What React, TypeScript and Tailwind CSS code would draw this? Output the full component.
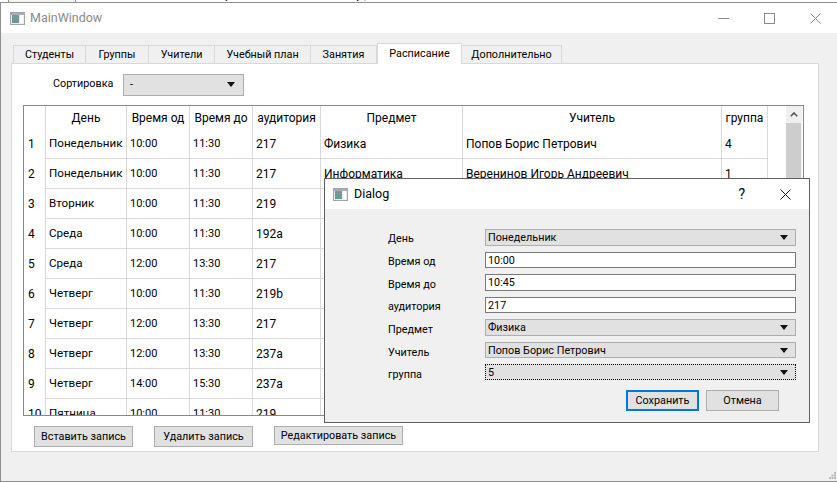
const F = "font-['Roboto',sans-serif]";

function WinIcon() {
  return (
    <svg width="15" height="13" viewBox="0 0 15 13" className="shrink-0">
      <defs>
        <linearGradient id="g" x1="0" y1="0" x2="0" y2="1">
          <stop offset="0" stopColor="#7f93a8" />
          <stop offset="1" stopColor="#5f9f86" />
        </linearGradient>
      </defs>
      <rect x="0.5" y="0.5" width="14" height="12" fill="#e8eef2" stroke="#a0a4a8" />
      <rect x="1" y="1" width="13" height="2" fill="#a8aeb4" />
      <rect x="2" y="3" width="7" height="8" fill="url(#g)" />
      <rect x="10" y="3" width="3" height="8" fill="#ffffff" />
    </svg>
  );
}

function Arrow() {
  return (
    <svg width="8" height="5" viewBox="0 0 8 5" className="shrink-0">
      <path d="M0 0H8L4 5Z" fill="#111" />
    </svg>
  );
}

function Combo({ text, cls, dotted }: { text: string; cls: string; dotted?: boolean }) {
  return (
    <div className={`flex items-center justify-between bg-[#e1e1e1] ${dotted ? "border border-dotted border-black" : "border border-[#adadad]"} ${cls}`}>
      <span className="pl-[2px] pt-[2px] leading-none whitespace-nowrap">{text}</span>
      <Arrow />
    </div>
  );
}

function Field({ text, cls }: { text: string; cls: string }) {
  return (
    <div className={`flex items-center bg-white border border-[#7a7a7a] pl-[2px] pt-[2px] ${cls}`}>{text}</div>
  );
}

function Btn({ text, cls }: { text: string; cls: string }) {
  return (
    <div className={`flex items-center justify-center whitespace-nowrap bg-[#e1e1e1] border border-[#adadad] pt-[1px] ${cls}`}>{text}</div>
  );
}

const tabs = [
  ["Студенты", "w-[73px]"],
  ["Группы", "w-[63px]"],
  ["Учители", "w-[66px]"],
  ["Учебный план", "w-[96px]"],
  ["Занятия", "w-[66px]"],
];

const rows = [
  ["1", "Понедельник", "10:00", "11:30", "217", "Физика", "Попов Борис Петрович", "4"],
  ["2", "Понедельник", "10:00", "11:30", "217", "Информатика", "Веренинов Игорь Андреевич", "1"],
  ["3", "Вторник", "10:00", "11:30", "219", "", "", ""],
  ["4", "Среда", "10:00", "11:30", "192a", "", "", ""],
  ["5", "Среда", "12:00", "13:30", "217", "", "", ""],
  ["6", "Четверг", "10:00", "11:30", "219b", "", "", ""],
  ["7", "Четверг", "12:00", "13:30", "217", "", "", ""],
  ["8", "Четверг", "12:00", "13:30", "237a", "", "", ""],
  ["9", "Четверг", "14:00", "15:30", "237a", "", "", ""],
  ["10", "Пятница", "10:00", "11:30", "219", "", "", ""],
];

const heads = ["", "День", "Время од", "Время до", "аудитория", "Предмет", "Учитель", "группа"];
const cols = "grid grid-cols-[22px_81px_63px_63px_68px_142px_259px_46px]";

function Table() {
  return (
    <div className="relative h-[311px] w-[781px] ml-[11px] border border-[#828790] bg-white overflow-hidden text-[12px]">
      <div className={`${cols} w-[744px] h-[23px]`}>
        {heads.map((h, i) => (
          <div key={i} className="flex items-center justify-center h-[23px] border-r border-[#d9d9d9] whitespace-nowrap">{h}</div>
        ))}
      </div>
      {rows.map((r) => (
        <div key={r[0]} className={`${cols} w-[744px] h-[30px]`}>
          {r.map((c, i) => (
            <div key={i} className={`flex items-center h-[30px] whitespace-nowrap overflow-hidden border-r border-[#d9d9d9] ${i === 0 ? "pl-[4px]" : "pl-[3px] border-b"} ${i === 2 || i === 3 ? "text-[11px] pt-[2px]" : i === 1 ? "text-[11.6px] pt-[1px]" : "text-[12px]"}`}>{c}</div>
          ))}
        </div>
      ))}
      <div className="absolute right-0 top-0 bottom-0 w-[16px] mr-[1px] bg-[#f0f0f0] flex flex-col">
        <div className="h-[17px] flex items-center justify-center">
          <svg width="8" height="5" viewBox="0 0 8 5"><path d="M0.8 4.2L4 1L7.2 4.2" fill="none" stroke="#555" strokeWidth="1.6" /></svg>
        </div>
        <div className="w-[15px] h-[120px] bg-[#cdcdcd]" />
      </div>
    </div>
  );
}

function Dialog() {
  const labels = ["День", "Время од", "Время до", "аудитория", "Предмет", "Учитель", "группа"];
  return (
    <div className="absolute left-[324px] top-[178px] w-[486px] h-[245px] border border-[#5f5f5f] bg-[#f0f0f0] flex flex-col">
      <div className="h-[30px] bg-white flex items-center pl-[8px] shrink-0">
        <WinIcon />
        <span className="ml-[6px] text-[12.5px]">Dialog</span>
        <span className="ml-auto mr-[35px] text-[14px]">?</span>
        <svg width="11" height="11" viewBox="0 0 11 11" className="mr-[18px]"><path d="M0.5 0.5L10.5 10.5M10.5 0.5L0.5 10.5" stroke="#111" strokeWidth="1" /></svg>
      </div>
      <div className="flex pl-[63px] flex-1">
        <div className="w-[97px] flex flex-col pt-[19px]">
          {labels.map((l) => (
            <div key={l} className="h-[22.7px] flex items-center whitespace-nowrap">{l}</div>
          ))}
        </div>
        <div className="w-[311px] flex flex-col pt-[20px]">
          <Combo text="Понедельник" cls="h-[17px] pr-[7px]" />
          <Field text="10:00" cls="h-[16px] mt-[6px]" />
          <Field text="10:45" cls="h-[17px] mt-[6px]" />
          <Field text="217" cls="h-[16px] mt-[6px]" />
          <Combo text="Физика" cls="h-[17px] mt-[6px] pr-[7px]" />
          <Combo text="Попов Борис Петрович" cls="h-[16px] mt-[6px] pr-[7px]" />
          <Combo text="5" dotted cls="h-[16px] mt-[6px] pr-[7px]" />
          <div className="flex mt-[10px] ml-[141px] gap-[7px]">
            <Btn text="Сохранить" cls="w-[73px] h-[21px] !border-2 !border-[#0078d7]" />
            <Btn text="Отмена" cls="w-[73px] h-[21px]" />
          </div>
        </div>
      </div>
    </div>
  );
}

function Grip() {
  return (
    <svg width="7" height="7" viewBox="0 0 7 7" className="absolute right-[1px] bottom-[2px]">
      <path d="M5 0h2v2H5zM2.500 2.500h2v2h-2zM5 2.500h2v2H5zM0 5h2v2H0zM2.500 5h2v2h-2zM5 5h2v2H5z" fill="#bcbcbc" />
    </svg>
  );
}

export default function App() {
  return (
    <div className={`relative w-[837px] h-[482px] overflow-hidden bg-white text-[10.8px] text-black ${F}`}>
      <div className="flex h-[2px] overflow-hidden">
        <div className="ml-[8px] w-[68px] h-[2px] shrink-0 border-x border-[#8f8f8f] bg-[#f4f4ee]" />
        <div className="pl-[21px] font-['Liberation_Mono',monospace] text-[13px] leading-[14px] mt-[-12px] whitespace-nowrap">
          setTableFontMode(<span className="text-[#2a9d3c]">"student"</span>, index);
        </div>
      </div>
      <div className="relative h-[480px] border-t border-l border-b border-[#8f8f8f] bg-[#f0f0f0] flex flex-col">
        <div className="h-[30px] bg-white flex items-center pl-[9px] shrink-0">
          <WinIcon />
          <span className="ml-[5px] text-[#8a8a8a] text-[12.5px]">MainWindow</span>
          <svg width="11" height="1" viewBox="0 0 11 1" className="ml-auto mr-[35px]"><rect width="11" height="1" fill="#8a8a8a" /></svg>
          <div className="w-[11px] h-[11px] border border-[#8a8a8a] mr-[35px]" />
          <svg width="11" height="11" viewBox="0 0 11 11" className="mr-[16px]"><path d="M0.5 0.5L10.5 10.5M10.5 0.5L0.5 10.5" stroke="#8a8a8a" strokeWidth="1" /></svg>
        </div>
        <div className="flex items-end h-[30px] pl-[12px] shrink-0">
          {tabs.map(([t, w]) => (
            <div key={t} className={`${w} h-[18px] flex items-center justify-center pt-[2px] bg-[#f0f0f0] border border-b-0 border-l-0 first:border-l border-[#d9d9d9]`}>{t}</div>
          ))}
          <div className="w-[85px] h-[21px] flex items-center justify-center bg-white border border-b-0 border-[#d9d9d9] relative z-10 -mb-px">Расписание</div>
          <div className="w-[100px] h-[18px] flex items-center justify-center pt-[2px] bg-[#f0f0f0] border border-b-0 border-l-0 border-[#d9d9d9]">Дополнительно</div>
        </div>
        <div className="ml-[10px] w-[808px] h-[389px] border border-[#d9d9d9] bg-white flex flex-col">
          <div className="flex items-center h-[41px] pl-[41px] shrink-0">
            <span className="w-[70px] -mt-[1px] whitespace-nowrap">Сортировка</span>
            <Combo text="-" cls="w-[121px] h-[22px] pr-[8px] pl-[4px]" />
          </div>
          <Table />
          <div className="flex items-start pl-[22px] pt-[10px] gap-[21px]">
            <Btn text="Вставить запись" cls="w-[99px] h-[21px]" />
            <Btn text="Удалить запись" cls="w-[99px] h-[21px]" />
            <Btn text="Редактировать запись" cls="w-[129px] h-[19px]" />
          </div>
        </div>
        <Grip />
      </div>
      <Dialog />
    </div>
  );
}
